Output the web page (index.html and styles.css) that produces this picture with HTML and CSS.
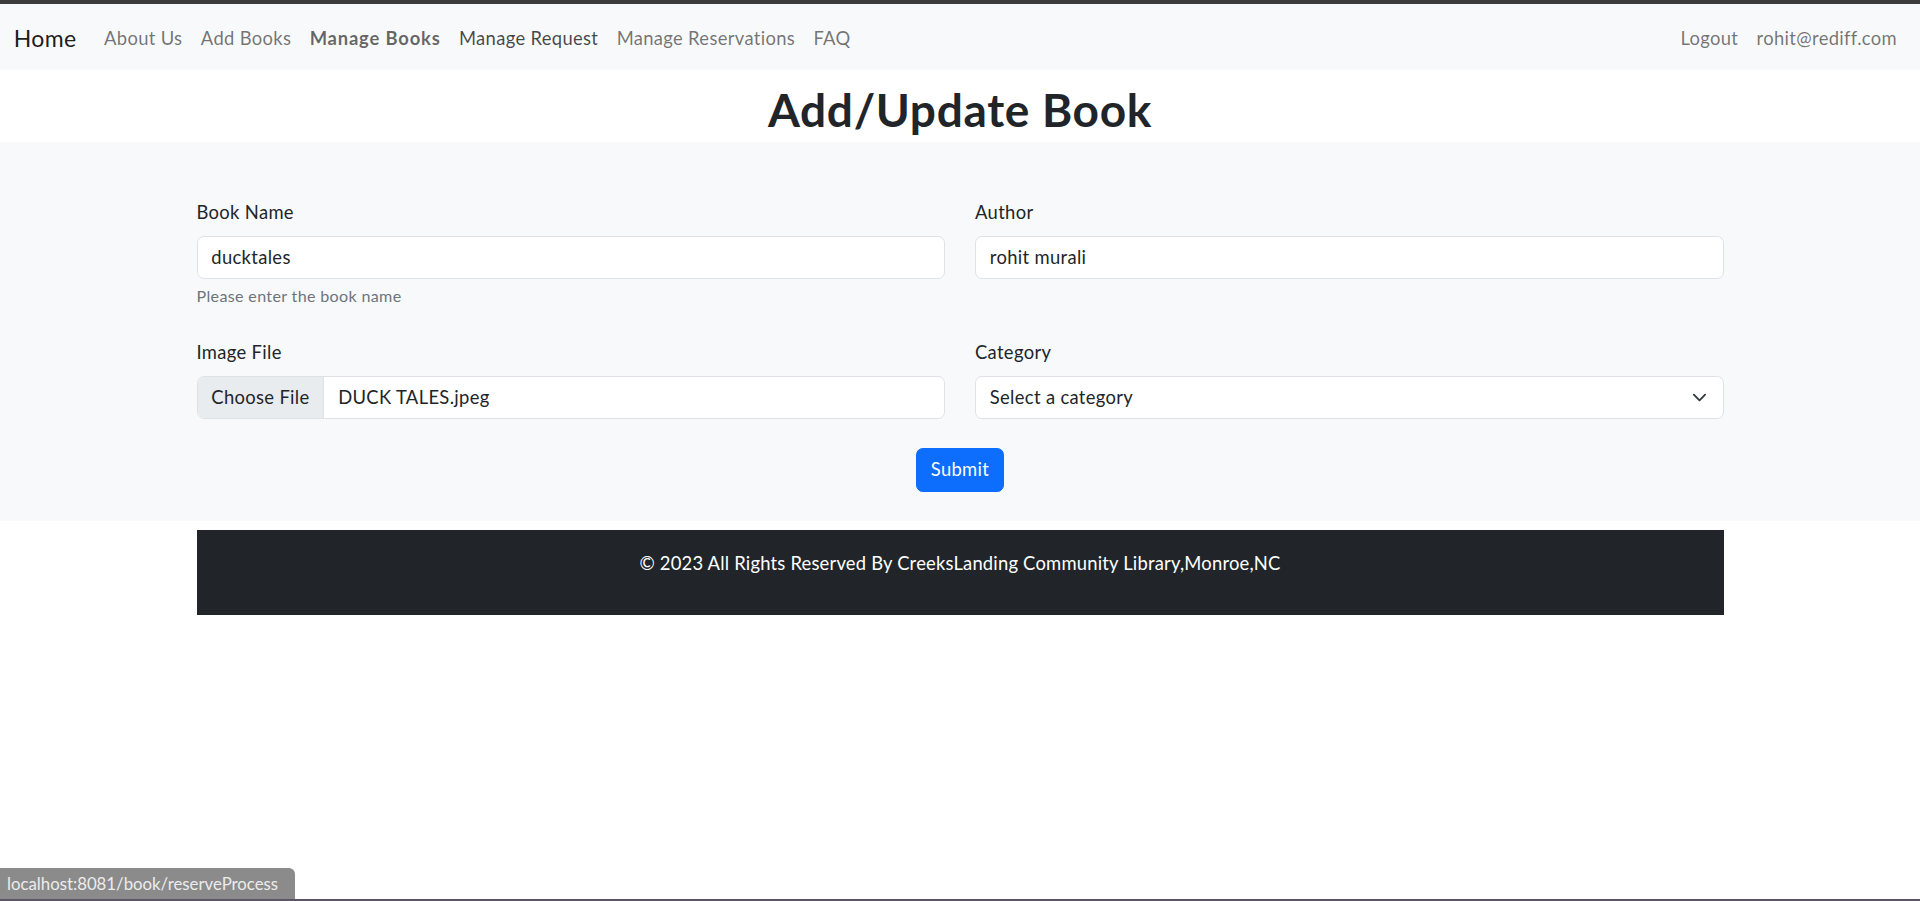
FILE: index.html
```html
<!DOCTYPE html>
<html lang="en">
<head>
<meta charset="utf-8">
<title>Add/Update Book</title>
<link rel="stylesheet" href="styles.css">
</head>
<body>
<div class="chrome-top"></div>
<nav class="navbar">
  <div class="nav-left">
    <a class="brand" href="#">Home</a>
    <ul class="nav-links">
      <li><a class="nav-link" href="#">About Us</a></li>
      <li><a class="nav-link" href="#">Add Books</a></li>
      <li><a class="nav-link nav-link-bold" href="#">Manage Books</a></li>
      <li><a class="nav-link nav-link-dark" href="#">Manage Request</a></li>
      <li><a class="nav-link" href="#">Manage Reservations</a></li>
      <li><a class="nav-link" href="#">FAQ</a></li>
    </ul>
  </div>
  <ul class="nav-links">
    <li><a class="nav-link" href="#">Logout</a></li>
    <li><a class="nav-link" href="#">rohit@rediff.com</a></li>
  </ul>
</nav>

<header class="page-title">
  <h1>Add/Update Book</h1>
</header>

<section class="form-section">
  <form class="book-form">
    <div class="form-grid">
      <div class="field">
        <label class="field-label">Book Name</label>
        <div class="control">ducktales</div>
        <div class="form-text">Please enter the book name</div>
      </div>
      <div class="field">
        <label class="field-label">Author</label>
        <div class="control">rohit murali</div>
      </div>
      <div class="field">
        <label class="field-label">Image File</label>
        <div class="control file-control">
          <span class="file-btn">Choose File</span>
          <span class="file-name">DUCK TALES.jpeg</span>
        </div>
      </div>
      <div class="field">
        <label class="field-label">Category</label>
        <div class="control select-control">
          <span>Select a category</span>
          <svg class="chevron" viewBox="0 0 16 16" width="15" height="15" aria-hidden="true"><path fill="none" stroke="#343a40" stroke-linecap="round" stroke-linejoin="round" stroke-width="2" d="m2 5 6 6 6-6"/></svg>
        </div>
      </div>
    </div>
    <div class="form-actions">
      <button type="button" class="btn-submit">Submit</button>
    </div>
  </form>
</section>

<footer class="site-footer">
  <p>© 2023 All Rights Reserved By CreeksLanding Community Library,Monroe,NC</p>
</footer>

<div class="status-bar">localhost:8081/book/reserveProcess</div>
<div class="chrome-bottom"></div>
</body>
</html>
```

FILE: styles.css
```css
html {
  font-size: 18.4px;
}

* {
  box-sizing: border-box;
}

body {
  margin: 0;
  font-family: "Segoe UI", Lato, "Noto Sans", sans-serif;
  font-size: 1rem;
  line-height: 1.5;
  letter-spacing: 0.018em;
  color: #212529;
  background: #fff;
}

.chrome-top {
  height: 4px;
  background: #3c3c3c;
}

.navbar {
  height: 66px;
  background: #f8f9fa;
  display: flex;
  align-items: center;
  justify-content: space-between;
  padding: 3px 13.8px 0;
}

.nav-left {
  display: flex;
  align-items: center;
}

.brand {
  font-size: 23px;
  line-height: 1.5;
  color: rgba(0, 0, 0, 0.9);
  text-decoration: none;
  margin-right: 18.4px;
}

.nav-links {
  display: flex;
  list-style: none;
  margin: 0;
  padding: 0;
}

.nav-link {
  display: block;
  padding: 9.2px 9.2px;
  color: rgba(0, 0, 0, 0.55);
  text-decoration: none;
}

.nav-link-bold {
  font-weight: 700;
  letter-spacing: 0.045em;
  color: rgba(0, 0, 0, 0.6);
}

.nav-link-dark {
  color: rgba(0, 0, 0, 0.72);
}

.page-title {
  height: 72px;
  padding-top: 11.6px;
  text-align: center;
}

.page-title h1 {
  margin: 0;
  font-size: 46px;
  line-height: 1.2;
  font-weight: 700;
  letter-spacing: 0.015em;
}

.form-section {
  background: #f8f9fa;
  padding: 57px 0 29px;
}

.book-form {
  width: 1527px;
  margin: 0 auto;
}

.form-grid {
  display: grid;
  grid-template-columns: 1fr 1fr;
  column-gap: 30px;
  row-gap: 31px;
}

.field-label {
  display: block;
  margin-bottom: 9.2px;
}

.control {
  height: 43.4px;
  background: #fff;
  border: 1px solid #dee2e6;
  border-radius: 6.9px;
  padding: 6.9px 13.8px;
  line-height: 27.6px;
}

.form-text {
  margin-top: 4.6px;
  font-size: 16.1px;
  line-height: 1.5;
  color: #6c757d;
}

.file-control {
  display: flex;
  padding: 0;
  overflow: hidden;
}

.file-btn {
  background: #e9ecef;
  padding: 6.9px 13.8px;
  border-right: 1px solid #dee2e6;
}

.file-name {
  padding: 6.9px 13.8px;
}

.select-control {
  display: flex;
  align-items: center;
  justify-content: space-between;
  padding-right: 16px;
}

.chevron {
  display: block;
}

.form-actions {
  display: flex;
  justify-content: center;
  margin-top: 29px;
}

.btn-submit {
  font-family: inherit;
  font-size: 1rem;
  line-height: 1.5;
  letter-spacing: inherit;
  color: #fff;
  background: #0d6efd;
  border: 1px solid #0d6efd;
  border-radius: 6.9px;
  padding: 6.9px 13.8px;
  cursor: pointer;
}

.site-footer {
  width: 1527px;
  margin: 9px auto 0;
  background: #212529;
  color: #fff;
  text-align: center;
  letter-spacing: 0.011em;
  padding: 20px 0 19.4px;
}

.site-footer p {
  margin: 0 0 18.4px;
}

.status-bar {
  position: fixed;
  left: 0;
  bottom: 2px;
  width: 295px;
  height: 31px;
  background: #8b8b8b;
  color: #ececec;
  font-size: 16.8px;
  letter-spacing: 0;
  line-height: 31px;
  padding-left: 7px;
  border-top-right-radius: 6px;
  white-space: nowrap;
  overflow: hidden;
}

.chrome-bottom {
  position: fixed;
  left: 0;
  right: 0;
  bottom: 0;
  height: 2px;
  background: #5d5468;
}
```
